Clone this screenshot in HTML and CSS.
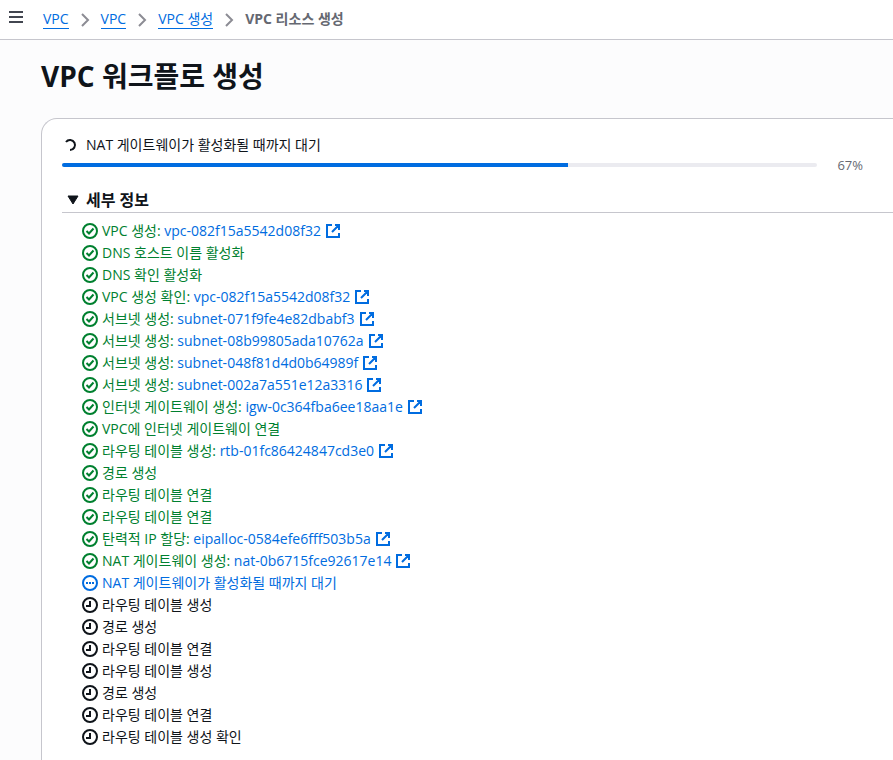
FILE: index.html
```html
<!DOCTYPE html>
<html lang="ko">
<head>
  <meta charset="UTF-8">
  <meta name="viewport" content="width=device-width, initial-scale=1.0">
  <title>VPC 리소스 생성</title>
  <link rel="stylesheet" href="styles.css">
</head>
<body>

<svg class="sprite" aria-hidden="true">
  <symbol id="success" viewBox="0 0 16 16"><circle cx="8" cy="8" r="7"/><path d="m4.500 8 2.500 2.500L11.500 5.500"/></symbol>
  <symbol id="progress" viewBox="0 0 16 16"><circle cx="8" cy="8" r="7"/><path d="M4 8h2M7 8h2M10 8h2"/></symbol>
  <symbol id="pending" viewBox="0 0 16 16"><circle cx="8" cy="8" r="7"/><path d="M8 4v5H4"/></symbol>
  <symbol id="external" viewBox="0 0 16 16"><path d="M7 2H2v12h12v-4M10 2h4v5M7 9l7-7"/></symbol>
  <symbol id="angle" viewBox="0 0 16 16"><path d="m5 2 6 6-6 6"/></symbol>
</svg>

<header class="topbar">
  <button type="button" class="menu" aria-label="메뉴">
    <svg class="icon" viewBox="0 0 16 16"><path d="M1 3h14M1 8h14M1 13h14"/></svg>
  </button>
  <nav class="breadcrumbs" aria-label="탐색 경로">
    <a href="#">VPC</a>
    <svg class="icon angle"><use href="#angle"/></svg>
    <a href="#">VPC</a>
    <svg class="icon angle"><use href="#angle"/></svg>
    <a href="#">VPC 생성</a>
    <svg class="icon angle"><use href="#angle"/></svg>
    <span class="current">VPC 리소스 생성</span>
  </nav>
</header>

<main>
  <h1>VPC 워크플로 생성</h1>

  <section class="card">
    <div class="status">
      <svg class="icon spinner" viewBox="0 0 16 16"><path d="M4 5A5 5 0 1 1 8 13"/></svg>
      <label for="workflow">NAT 게이트웨이가 활성화될 때까지 대기</label>
    </div>
    <div class="meter">
      <progress id="workflow" max="100" value="67"></progress>
      <span class="percent">67%</span>
    </div>

    <details open>
      <summary><svg class="icon caret" viewBox="0 0 16 16"><path d="M3 4h10L8 12z"/></svg>세부 정보</summary>
      <ul class="steps">
        <li class="success"><svg class="icon"><use href="#success"/></svg><span>VPC 생성: <a href="#">vpc-082f15a5542d08f32</a></span><svg class="icon external"><use href="#external"/></svg></li>
        <li class="success"><svg class="icon"><use href="#success"/></svg><span>DNS 호스트 이름 활성화</span></li>
        <li class="success"><svg class="icon"><use href="#success"/></svg><span>DNS 확인 활성화</span></li>
        <li class="success"><svg class="icon"><use href="#success"/></svg><span>VPC 생성 확인: <a href="#">vpc-082f15a5542d08f32</a></span><svg class="icon external"><use href="#external"/></svg></li>
        <li class="success"><svg class="icon"><use href="#success"/></svg><span>서브넷 생성: <a href="#">subnet-071f9fe4e82dbabf3</a></span><svg class="icon external"><use href="#external"/></svg></li>
        <li class="success"><svg class="icon"><use href="#success"/></svg><span>서브넷 생성: <a href="#">subnet-08b99805ada10762a</a></span><svg class="icon external"><use href="#external"/></svg></li>
        <li class="success"><svg class="icon"><use href="#success"/></svg><span>서브넷 생성: <a href="#">subnet-048f81d4d0b64989f</a></span><svg class="icon external"><use href="#external"/></svg></li>
        <li class="success"><svg class="icon"><use href="#success"/></svg><span>서브넷 생성: <a href="#">subnet-002a7a551e12a3316</a></span><svg class="icon external"><use href="#external"/></svg></li>
        <li class="success"><svg class="icon"><use href="#success"/></svg><span>인터넷 게이트웨이 생성: <a href="#">igw-0c364fba6ee18aa1e</a></span><svg class="icon external"><use href="#external"/></svg></li>
        <li class="success"><svg class="icon"><use href="#success"/></svg><span>VPC에 인터넷 게이트웨이 연결</span></li>
        <li class="success"><svg class="icon"><use href="#success"/></svg><span>라우팅 테이블 생성: <a href="#">rtb-01fc86424847cd3e0</a></span><svg class="icon external"><use href="#external"/></svg></li>
        <li class="success"><svg class="icon"><use href="#success"/></svg><span>경로 생성</span></li>
        <li class="success"><svg class="icon"><use href="#success"/></svg><span>라우팅 테이블 연결</span></li>
        <li class="success"><svg class="icon"><use href="#success"/></svg><span>라우팅 테이블 연결</span></li>
        <li class="success"><svg class="icon"><use href="#success"/></svg><span>탄력적 IP 할당: <a href="#">eipalloc-0584efe6fff503b5a</a></span><svg class="icon external"><use href="#external"/></svg></li>
        <li class="success"><svg class="icon"><use href="#success"/></svg><span>NAT 게이트웨이 생성: <a href="#">nat-0b6715fce92617e14</a></span><svg class="icon external"><use href="#external"/></svg></li>
        <li class="running"><svg class="icon"><use href="#progress"/></svg><span>NAT 게이트웨이가 활성화될 때까지 대기</span></li>
        <li><svg class="icon"><use href="#pending"/></svg><span>라우팅 테이블 생성</span></li>
        <li><svg class="icon"><use href="#pending"/></svg><span>경로 생성</span></li>
        <li><svg class="icon"><use href="#pending"/></svg><span>라우팅 테이블 연결</span></li>
        <li><svg class="icon"><use href="#pending"/></svg><span>라우팅 테이블 생성</span></li>
        <li><svg class="icon"><use href="#pending"/></svg><span>경로 생성</span></li>
        <li><svg class="icon"><use href="#pending"/></svg><span>라우팅 테이블 연결</span></li>
        <li><svg class="icon"><use href="#pending"/></svg><span>라우팅 테이블 생성 확인</span></li>
      </ul>
    </details>
  </section>
</main>

</body>
</html>
```
FILE: styles.css
```css
* { box-sizing: border-box; }
body { margin: 0; font-family: "Open Sans", "Noto Sans CJK KR", sans-serif; font-size: 14px; line-height: 22px; color: #0f141a; background: #fcfcfd; }
a { color: #006ce0; text-decoration: none; }

.sprite { display: none; }
.icon { width: 16px; height: 16px; flex: none; fill: none; stroke: currentColor; stroke-width: 2; }

.topbar { display: flex; align-items: center; gap: 19px; height: 40px; padding: 0 8px; background: #fff; border-bottom: 1px solid #c6c6cd; }
.menu { display: flex; padding: 0 0 6px; border: 0; background: none; color: #424650; cursor: pointer; }
.breadcrumbs { display: flex; align-items: center; gap: 8px; }
.breadcrumbs a, .current { line-height: 18px; border-bottom: 1px solid #006ce0; }
.angle { color: #8c8c94; }
.breadcrumbs .current { font-weight: 700; color: #656871; border-color: transparent; }

main { padding: 18px 0 0 41px; }
h1 { margin: 0 0 24px; font-size: 28px; line-height: 36px; }

.card { padding: 15px 0 12px 20px; background: #fff; border: 1px solid #c6c6cd; border-width: 1px 0 0 1px; border-top-left-radius: 16px; }
.status { display: flex; align-items: center; gap: 8px; }
.meter { display: flex; align-items: center; gap: 20px; height: 18px; padding-right: 30px; }
progress { flex: 1; min-width: 0; height: 4px; appearance: none; border: 0; border-radius: 2px; overflow: hidden; }
progress::-webkit-progress-bar { background: #ebebf0; }
progress::-webkit-progress-value { background: #006ce0; }
.percent { line-height: 18px; font-size: 13px; color: #656871; }

details { margin-top: 14px; }
summary { display: flex; align-items: center; gap: 5px; height: 25px; padding-left: 3px; font-size: 16px; font-weight: 700; border-bottom: 1px solid #c6c6cd; cursor: pointer; }
.caret { fill: currentColor; stroke-width: 1; }
.steps { margin: 0; padding: 7px 20px; list-style: none; }
.steps li { display: flex; align-items: center; gap: 4px; }
.success { color: #00802f; }
.running { color: #006ce0; }
.external { color: #006ce0; }
```
